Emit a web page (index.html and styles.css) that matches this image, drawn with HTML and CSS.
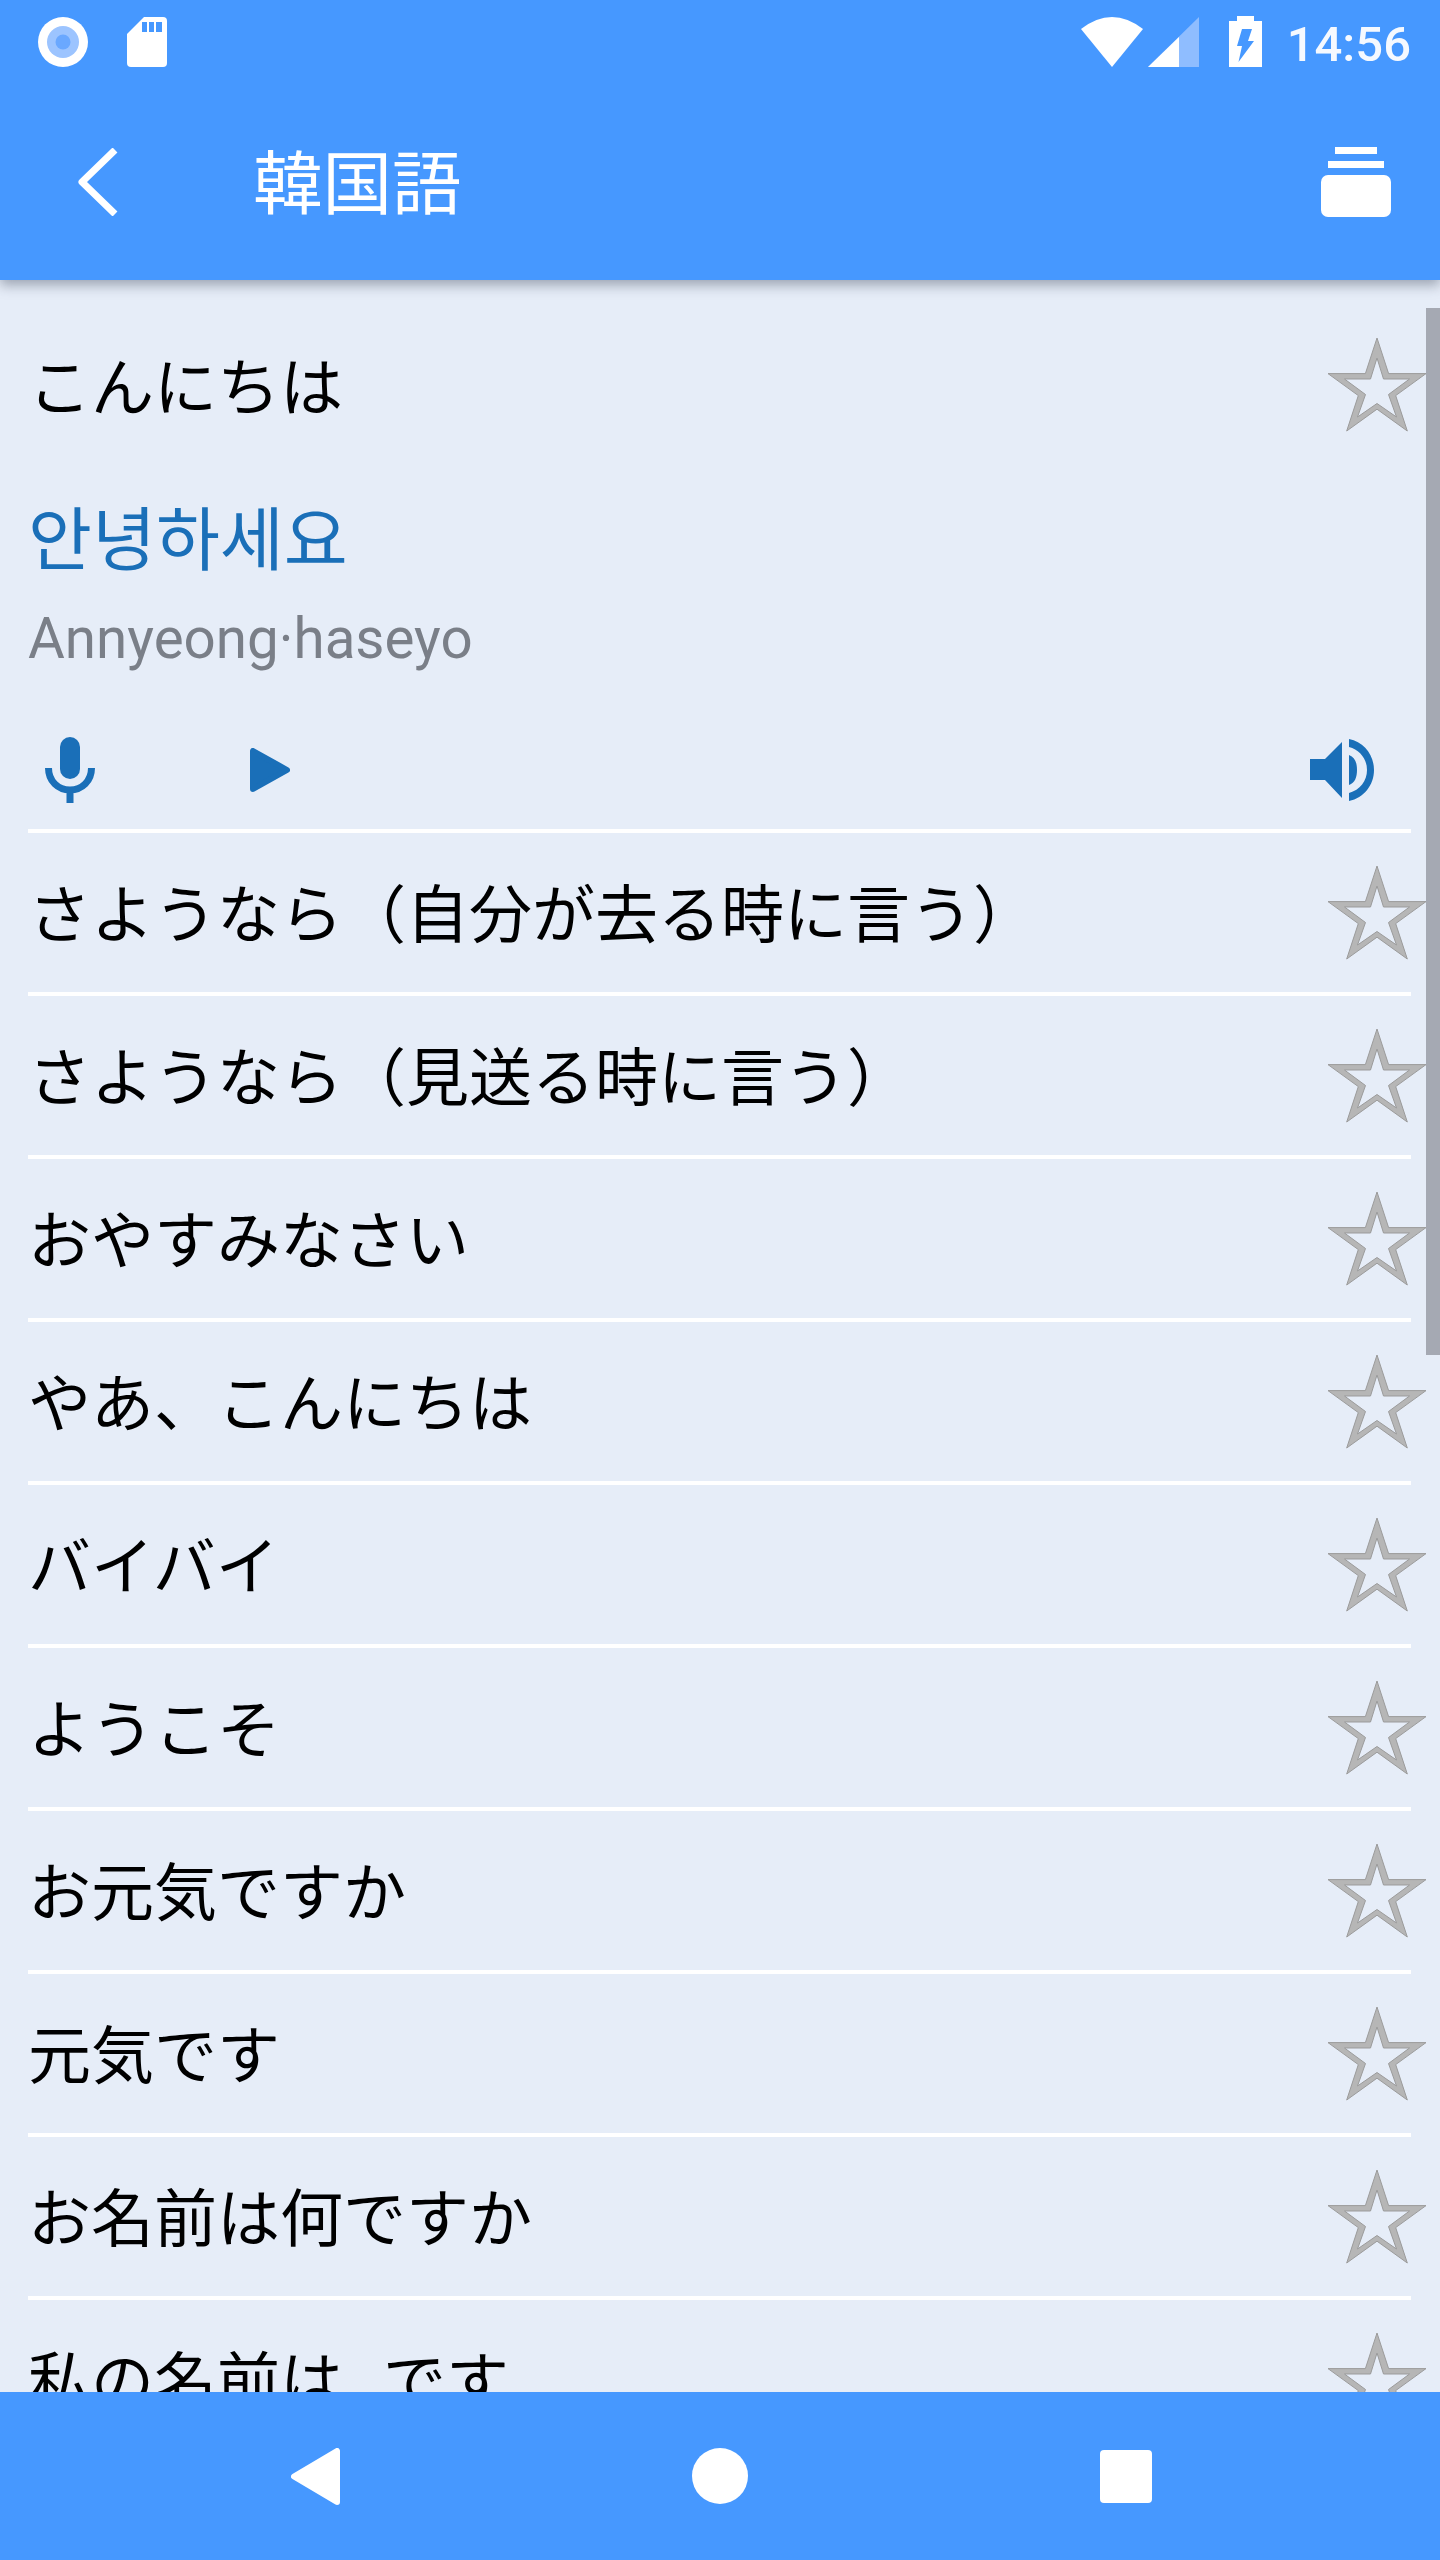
FILE: index.html
```html
<!DOCTYPE html>
<html lang="ja">
<head>
    <meta charset="UTF-8">
    <meta name="viewport" content="width=device-width, initial-scale=1.0">
    <link rel="stylesheet" href="styles.css">
    <title>韓国語</title>
</head>
<body>
    <svg class="defs" width="0" height="0">
        <symbol id="star" viewBox="0 0 98 94">
            <path class="star_band" fill-rule="evenodd" d="M49 0 60.6 35.6H98L67.7 57.6 79.3 93 49 71.200 18.7 93 30.3 57.6 0 35.6H37.4ZM49 20 42.500 41H16.500L37.500 56.500 29.500 79 49 65.500 68.500 79 60.500 56.500 81.500 41H55.500Z"/>
        </symbol>
    </svg>

    <header class="app_head">
        <div class="status_bar">
            <svg class="ic_record" viewBox="0 0 50 50"><circle cx="25" cy="25" r="25" fill="#fff"/><circle cx="25" cy="25" r="16" fill="#9cc4ff"/><circle cx="25" cy="25" r="7.5" fill="#6aa8ff"/></svg>
            <svg class="ic_sd" viewBox="0 0 40 50"><path fill="#fff" d="M17 0H36a4 4 0 0 1 4 4V46a4 4 0 0 1-4 4H4a4 4 0 0 1-4-4V17Z"/><path fill="#4698ff" d="M15 5h5v10h-5zM22 5h5v10h-5zM29 5h6v10h-6z"/></svg>
            <div class="status_right">
                <svg class="ic_wifi" viewBox="0 0 62 50"><path fill="#fff" d="M0 12Q31-12 62 12L31 50Z"/></svg>
                <svg class="ic_signal" viewBox="0 0 51 50"><path fill="#8fbdff" d="M0 50 51 0V50Z"/><path fill="#fff" d="M0 50 31 20V50Z"/></svg>
                <svg class="ic_battery" viewBox="0 0 33 51"><path fill="#fff" d="M8 0H25V5H33V51H0V5H8Z"/><path fill="#4698ff" d="M13 13H23L19 25H25L9.500 46 13 30H8Z"/></svg>
                <span class="clock">14:56</span>
            </div>
        </div>
        <div class="toolbar">
            <svg class="ic_back" viewBox="0 0 40 68"><path fill="none" stroke="#fff" stroke-width="7" d="M37 2 4 34 37 66" stroke-linejoin="round"/></svg>
            <h1 class="title">韓国語</h1>
            <svg class="ic_stack" viewBox="0 0 70 70"><path fill="#fff" d="M14 0H56V7H14ZM7 14H63V21H7Z"/><rect y="28" width="70" height="42" rx="7" fill="#fff"/></svg>
        </div>
    </header>

    <main class="phrase_list">
        <div class="scroll_thumb"></div>

        <section class="open_item">
            <div class="open_top">
                <span class="phrase">こんにちは</span>
                <svg class="star"><use href="#star"/></svg>
            </div>
            <p class="korean">안녕하세요</p>
            <p class="roman">Annyeong·haseyo</p>
            <div class="actions">
                <svg class="ic_mic" viewBox="0 0 50 66"><rect x="15" width="20" height="42" rx="10" fill="#1a6fb8"/><path fill="none" stroke="#1a6fb8" stroke-width="7" d="M3.500 31C3.500 44 13 53 25 53S46.500 44 46.500 31M25 53V66"/></svg>
                <svg class="ic_play" viewBox="0 0 40 44"><path fill="#1a6fb8" stroke="#1a6fb8" stroke-width="6" stroke-linejoin="round" d="M3 3V41L37 22Z"/></svg>
                <svg class="ic_sound" viewBox="0 0 64 62"><path fill="#1a6fb8" d="M0 20H15L32 3V59L15 41H0ZM39 16C45 18 47 24 47 31S45 44 39 46ZM39 0C54 3 64 16 64 31S54 59 39 62V54C50 51 57 42 57 31S50 11 39 8Z"/></svg>
            </div>
        </section>

        <div class="item"><span class="phrase">さようなら（自分が去る時に言う）</span><svg class="star"><use href="#star"/></svg></div>
        <div class="item"><span class="phrase">さようなら（見送る時に言う）</span><svg class="star"><use href="#star"/></svg></div>
        <div class="item"><span class="phrase">おやすみなさい</span><svg class="star"><use href="#star"/></svg></div>
        <div class="item"><span class="phrase">やあ、こんにちは</span><svg class="star"><use href="#star"/></svg></div>
        <div class="item"><span class="phrase">バイバイ</span><svg class="star"><use href="#star"/></svg></div>
        <div class="item"><span class="phrase">ようこそ</span><svg class="star"><use href="#star"/></svg></div>
        <div class="item"><span class="phrase">お元気ですか</span><svg class="star"><use href="#star"/></svg></div>
        <div class="item"><span class="phrase">元気です</span><svg class="star"><use href="#star"/></svg></div>
        <div class="item"><span class="phrase">お名前は何ですか</span><svg class="star"><use href="#star"/></svg></div>
        <div class="item"><span class="phrase">私の名前は<span class="blank"></span>です</span><svg class="star"><use href="#star"/></svg></div>
    </main>

    <footer class="nav_bar">
        <svg class="ic_nav_back" viewBox="0 0 49 57"><path fill="#fff" stroke="#fff" stroke-width="6" stroke-linejoin="round" d="M46 3V54L3 28.500Z"/></svg>
        <svg class="ic_nav_home" viewBox="0 0 56 56"><circle cx="28" cy="28" r="28" fill="#fff"/></svg>
        <svg class="ic_nav_recent" viewBox="0 0 52 53"><rect width="52" height="53" rx="4" fill="#fff"/></svg>
    </footer>
</body>
</html>
```

FILE: styles.css
```css
*{
    box-sizing: border-box;
}
html, body{
    margin: 0;
    padding: 0;
}
body{
    width: 1440px;
    height: 2560px;
    display: flex;
    flex-direction: column;
    overflow: hidden;
    background-color: #e6edf8;
    font-family: "Noto Sans CJK JP", "Noto Sans", sans-serif;
    color: #000;
}
svg{
    display: block;
    flex: none;
}
.defs{
    position: absolute;
}

/* top blue area */
.app_head{
    height: 280px;
    flex: none;
    background-color: #4698ff;
    box-shadow: 0 5px 12px rgba(40, 50, 70, 0.4);
    position: relative;
    z-index: 2;
}
.status_bar{
    height: 84px;
    padding: 17px 29px 0 38px;
    display: flex;
    align-items: flex-start;
}
.ic_record{
    width: 50px;
    height: 50px;
}
.ic_sd{
    width: 40px;
    height: 50px;
    margin-left: 39px;
}
.status_right{
    margin-left: auto;
    display: flex;
    align-items: flex-start;
}
.ic_wifi{
    width: 62px;
    height: 50px;
}
.ic_signal{
    width: 51px;
    height: 50px;
    margin-left: 5px;
}
.ic_battery{
    width: 33px;
    height: 51px;
    margin-left: 30px;
    margin-top: -1px;
}
.clock{
    margin-left: 25px;
    font-family: Roboto, sans-serif;
    font-weight: 500;
    font-size: 49px;
    line-height: 56px;
    color: #fff;
    opacity: 0.95;
}
.toolbar{
    height: 196px;
    display: flex;
    align-items: center;
    padding: 0 49px 0 78px;
}
.ic_back{
    width: 40px;
    height: 68px;
}
.title{
    margin: 0 0 6px 135px;
    font-size: 69.5px;
    font-weight: 400;
    line-height: 90px;
    color: #fff;
}
.ic_stack{
    width: 70px;
    height: 70px;
    margin-left: auto;
}

/* list */
.phrase_list{
    flex: 1;
    min-height: 0;
    overflow: hidden;
    position: relative;
    padding: 0 29px 0 28px;
}
.scroll_thumb{
    position: absolute;
    top: 28px;
    right: 0;
    width: 14px;
    height: 1047px;
    background-color: #a5a9b3;
}
.open_item{
    height: 553px;
    border-bottom: 4px solid #fff;
}
.open_top{
    height: 210px;
    display: flex;
    align-items: center;
    justify-content: space-between;
}
.phrase{
    font-size: 63px;
    line-height: 80px;
    white-space: nowrap;
    margin-bottom: 6px;
}
.open_top .phrase{
    margin-bottom: 4px;
}
.blank{
    display: inline-block;
    width: 40px;
}
.star{
    width: 98px;
    height: 94px;
    margin-right: -15px;
}
.star_band{
    fill: #b6b6b6;
    stroke: #9b9b9b;
    stroke-width: 1;
}
.korean{
    margin: 0;
    font-family: "Noto Sans CJK KR", sans-serif;
    font-size: 69.5px;
    line-height: 90px;
    color: #1a6fb8;
}
.roman{
    margin: 24px 0 0;
    font-family: Roboto, sans-serif;
    font-size: 56.5px;
    line-height: 70px;
    color: #7a7f88;
}
.actions{
    height: 100px;
    margin-top: 46px;
    display: flex;
    align-items: center;
}
.ic_mic{
    width: 50px;
    height: 66px;
    margin-left: 17px;
}
.ic_play{
    width: 40px;
    height: 44px;
    margin-left: 155px;
}
.ic_sound{
    width: 64px;
    height: 62px;
    margin-left: auto;
    margin-right: 37px;
}
.item{
    height: 163px;
    flex: none;
    border-bottom: 4px solid #fff;
    display: flex;
    align-items: center;
    justify-content: space-between;
}

/* bottom nav */
.nav_bar{
    height: 168px;
    flex: none;
    background-color: #4698ff;
    position: relative;
    z-index: 2;
    display: flex;
    align-items: center;
}
.ic_nav_back{
    width: 49px;
    height: 57px;
    margin-left: 291px;
}
.ic_nav_home{
    width: 56px;
    height: 56px;
    margin-left: 352px;
}
.ic_nav_recent{
    width: 52px;
    height: 53px;
    margin-left: 352px;
}
```
